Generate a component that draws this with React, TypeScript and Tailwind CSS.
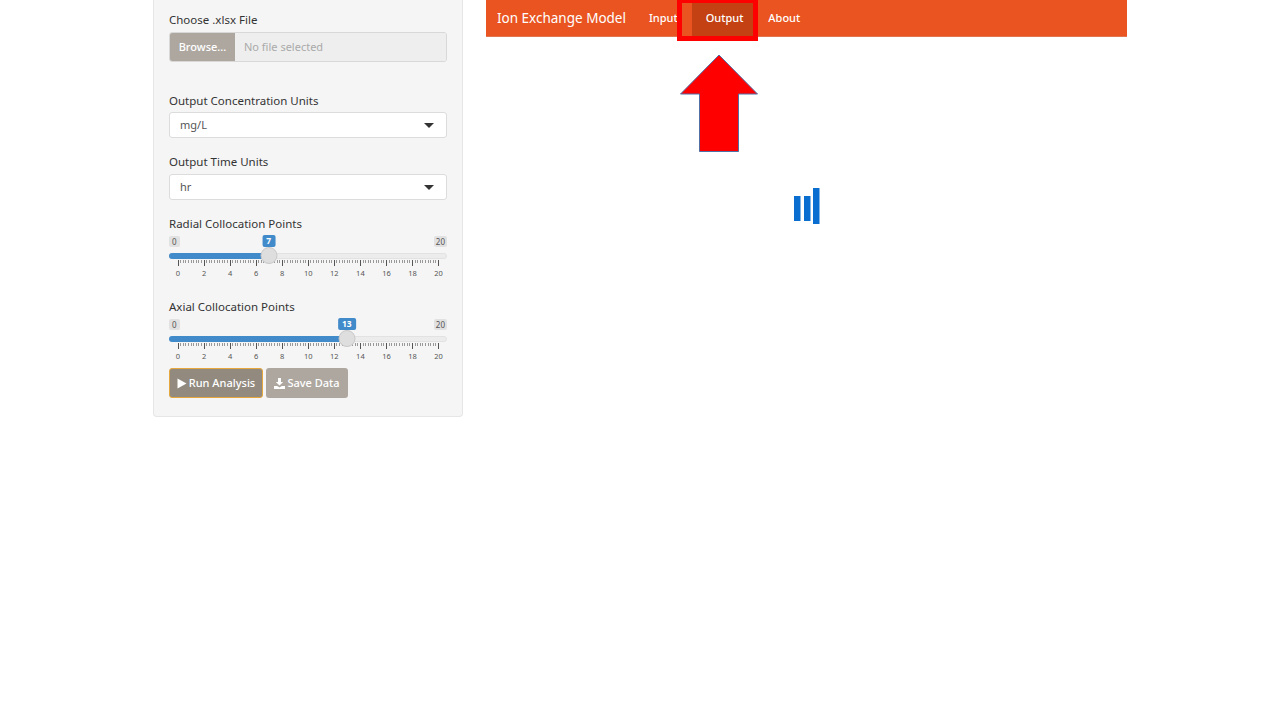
import React from 'react';
import { ChevronDown } from 'lucide-react';

const font = { fontFamily: '"Noto Sans", sans-serif' };

function Select({ value }: { value: string }) {
  return (
    <div className="flex items-center justify-between w-[278px] h-[26px] pl-[10px] pr-[12px] bg-white border border-[#dcdcdc] rounded-[3px] text-[11px] text-[#555]">
      <span>{value}</span>
      <span className="w-0 h-0 border-x-[5px] border-x-transparent border-t-[5px] border-t-[#333]" />
    </div>
  );
}

function Slider({ value, label }: { value: number; label: string }) {
  const left = 8.5;
  const step = 13.03;
  const thumb = left + value * step;
  const ticks = Array.from({ length: 101 }, (_, i) => i / 5).filter((v) => v <= 20);
  return (
    <div className="mt-[16px]">
      <div className="text-[11.5px] leading-[16px] text-[#333]">{label}</div>
      <div className="relative h-[53px] w-[278px] mt-[1px]">
        <span className="absolute left-0 top-[3px] px-[3px] h-[11px] leading-[11px] rounded-[2px] bg-[#e1e1e1] text-[8px] text-[#555]">0</span>
        <span className="absolute right-0 top-[3px] px-[2px] h-[11px] leading-[11px] rounded-[2px] bg-[#e1e1e1] text-[8px] text-[#555]">20</span>
        <span
          className="absolute -translate-x-1/2 top-[2px] px-[4px] h-[12px] leading-[12px] rounded-[2px] bg-[#428bca] text-[8.5px] font-bold text-white"
          style={{ left: thumb }}
        >
          {value}
        </span>
        <div className="absolute left-0 right-0 top-[20px] h-[6px] rounded-full bg-[#ececec] border border-[#e2e2e2]" />
        <div className="absolute left-0 top-[20px] h-[6px] rounded-l-full bg-[#428bca]" style={{ width: thumb }} />
        {[0, 1, 2, 3, 4, 5, 6, 7, 8, 9, 10, 11, 12, 13, 14, 15, 16, 17, 18, 19, 20].length > 0 &&
          ticks.map((t) => {
            const major = Number.isInteger(t / 2);
            return (
              <span
                key={t}
                className={major ? 'absolute top-[27px] w-px h-[6px] bg-[#555]' : 'absolute top-[27px] w-px h-[3px] bg-[#999]'}
                style={{ left: left + t * step }}
              />
            );
          })}
        {[0, 2, 4, 6, 8, 10, 12, 14, 16, 18, 20].map((t) => (
          <span
            key={t}
            className="absolute -translate-x-1/2 top-[35px] text-[7.5px] leading-[11px] text-[#555]"
            style={{ left: left + t * step + 0.5 }}
          >
            {t}
          </span>
        ))}
        <span
          className="absolute -translate-x-1/2 top-[14px] w-[17px] h-[17px] rounded-full bg-[#dedede] border border-[#c8c8c8]"
          style={{ left: thumb + 0.5 }}
        />
      </div>
    </div>
  );
}

export default function App() {
  return (
    <div className="relative min-h-screen w-[1280px] h-[720px] overflow-hidden bg-white" style={font}>
      <div className="flex pl-[153px] gap-[23px] items-start">
        {/* Sidebar */}
        <div className="w-[310px] h-[417px] px-[15px] pt-[12px] bg-[#f5f5f5] border-x border-b border-[#e6e6e6] rounded-b-[4px]">
          <div className="text-[11.5px] leading-[16px] text-[#333]">Choose .xlsx File</div>
          <div className="flex w-[278px] h-[30px] mt-[4px] rounded-[3px] overflow-hidden border border-[#d8d8d8] text-[11px]">
            <div className="flex items-center justify-center w-[65px] bg-[#aea79f] text-white font-medium">Browse...</div>
            <div className="flex items-center flex-1 pl-[9px] bg-[#eeeeee] text-[#aaa]">No file selected</div>
          </div>

          <div className="text-[11.5px] leading-[16px] text-[#333] mt-[31px]">Output Concentration Units</div>
          <div className="mt-[3px]"><Select value="mg/L" /></div>
          <div className="text-[11.5px] leading-[16px] text-[#333] mt-[16px]">Output Time Units</div>
          <div className="mt-[4px]"><Select value="hr" /></div>

          <Slider value={7} label="Radial Collocation Points" />
          <div className="-mt-[3px]">
            <Slider value={13} label="Axial Collocation Points" />
          </div>

          <div className="flex gap-[3px] mt-[-1px] text-[11px] font-medium text-white">
            <div className="flex items-center justify-center gap-[2px] w-[94px] h-[30px] rounded-[3px] bg-[#928a7f] border border-[#e6a83c]">
              <svg width="10" height="11" viewBox="0 0 10 11"><path d="M0.5 0.5 L9.5 5.5 L0.5 10.5 Z" fill="#fff" /></svg>
              <span>Run Analysis</span>
            </div>
            <div className="flex items-center justify-center gap-[2px] w-[82px] h-[30px] rounded-[3px] bg-[#aea79f]">
              <svg width="11" height="11" viewBox="0 0 11 11">
                <path d="M4 0 H7 V4 H9.2 L5.5 7.6 L1.8 4 H4 Z M0 8 H3.2 L5.5 9.4 L7.8 8 H11 V11 H0 Z" fill="#fff" />
              </svg>
              <span>Save Data</span>
            </div>
          </div>
        </div>

        {/* Main */}
        <div className="w-[641px]">
          <nav className="flex items-center h-[37px] bg-[#e95420] border-b border-[#e0764f] text-white">
            <span className="ml-[11px] text-[13.5px]">Ion Exchange Model</span>
            <div className="flex ml-[9px] text-[11px] font-medium">
              <a className="flex items-center h-[36px] px-[14px]">Input</a>
              <a className="flex items-center h-[36px] px-[14px] bg-[#c34113]">Output</a>
              <a className="flex items-center h-[36px] px-[11px]">About</a>
            </div>
          </nav>

          <div className="flex justify-center mt-[151px]">
            <svg width="26" height="36" viewBox="0 0 26 36">
              <rect x="0" y="8" width="6.5" height="25" fill="#0a6ed1" />
              <rect x="10" y="8" width="6.5" height="25" fill="#0a6ed1" />
              <rect x="19" y="0" width="6.5" height="36" fill="#0a6ed1" />
            </svg>
          </div>
        </div>
      </div>

      {/* Annotation drawn over the screenshot */}
      <div className="absolute left-[677px] -top-[2px] w-[81px] h-[43px] border-[5px] border-t-[5px] border-[#ff0000]" />
      <svg className="absolute left-[678px] top-[53px]" width="82" height="101" viewBox="678 53 82 101">
        <path d="M719 55 L757.5 94 H738.5 V151.5 H699.5 V94 H680.5 Z" fill="#ff0000" stroke="#4f6fa5" strokeWidth="1" />
      </svg>
    </div>
  );
}
